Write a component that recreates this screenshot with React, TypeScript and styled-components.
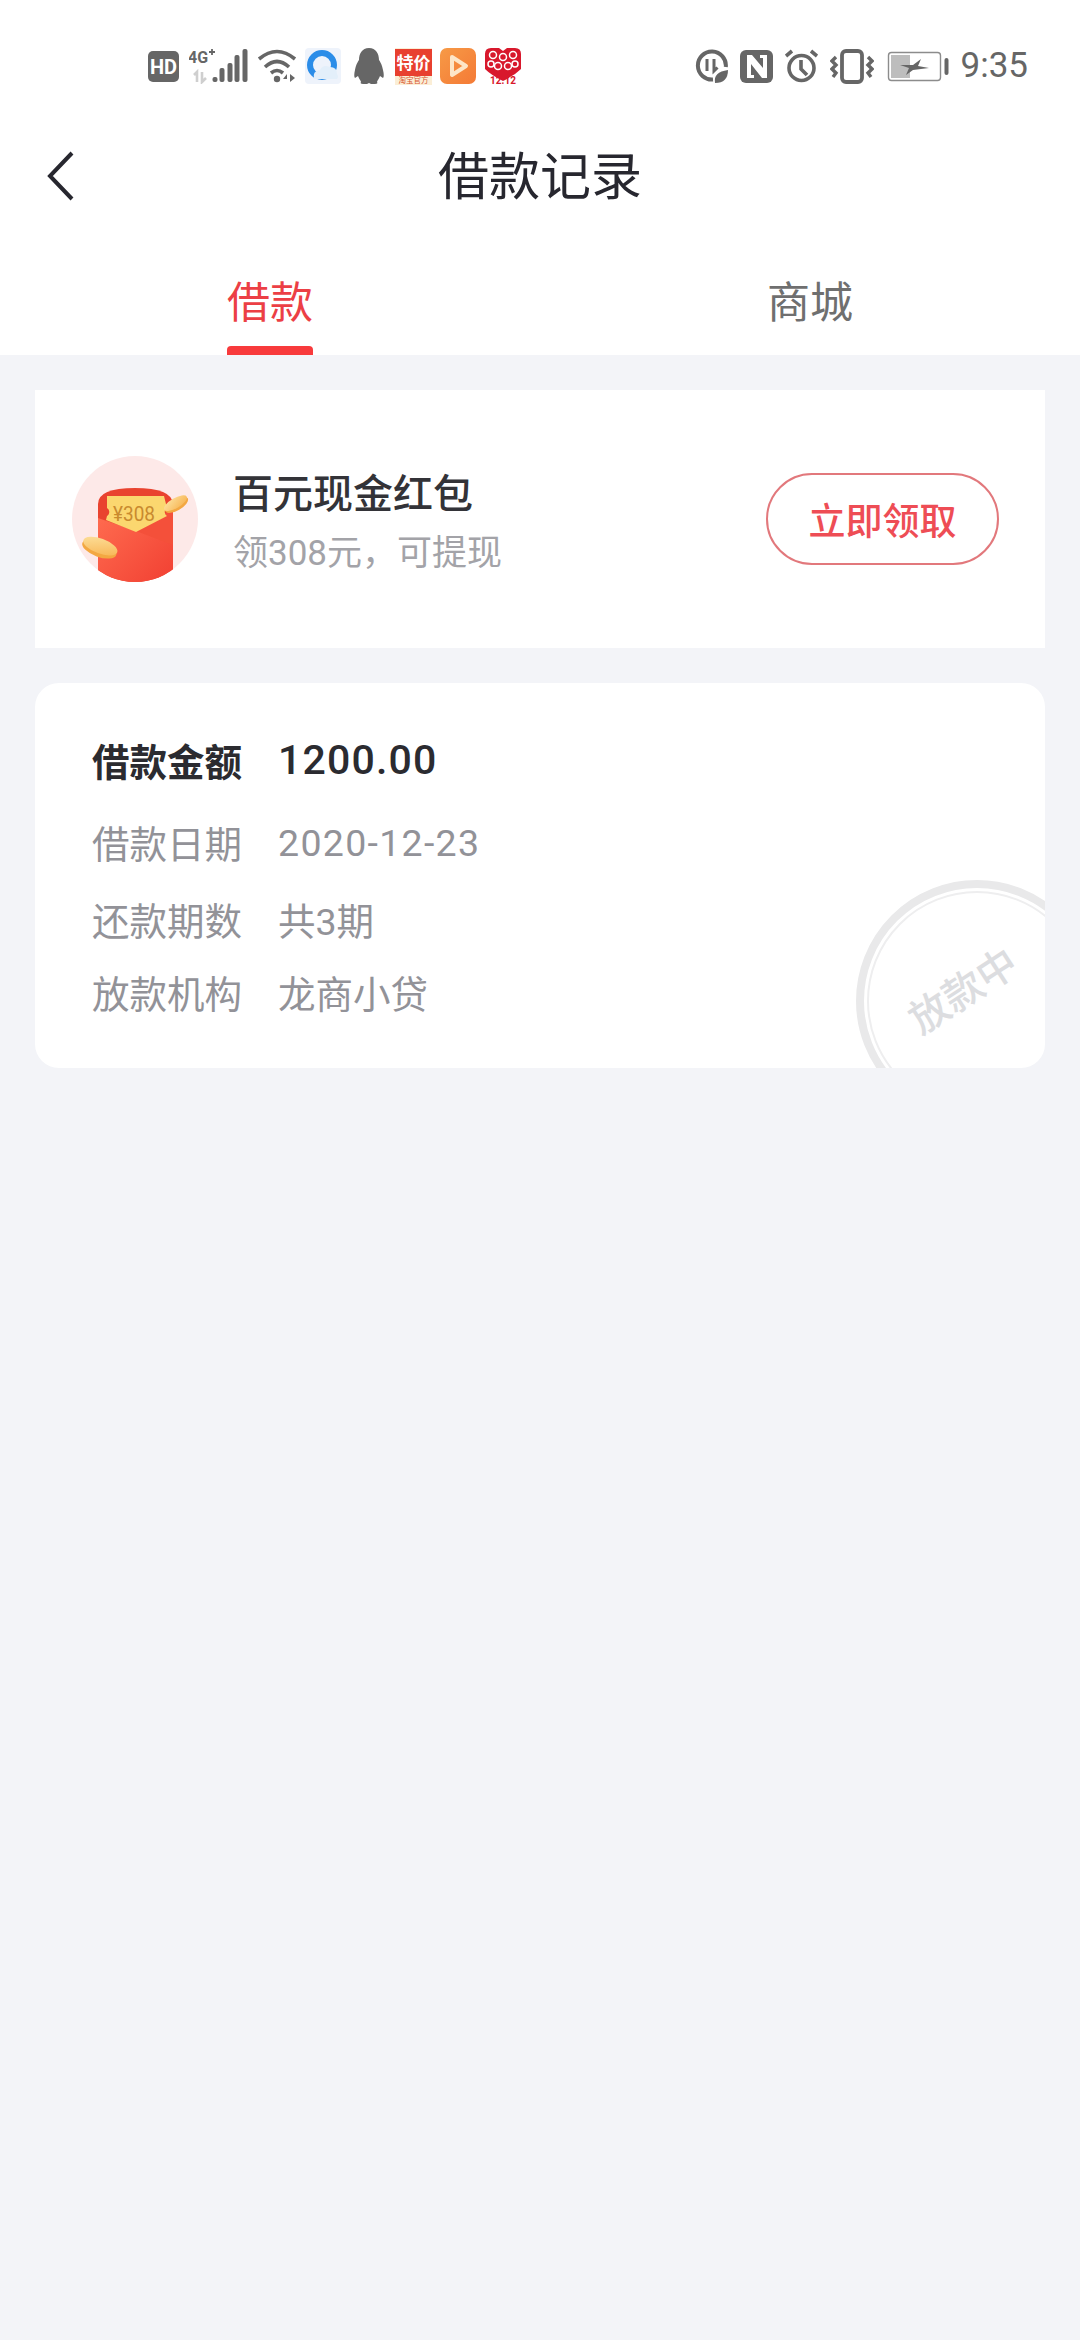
import React from "react";
import styled, {createGlobalStyle} from "styled-components";

const GlobalStyle = createGlobalStyle`
  html, body {
    margin: 0;
    padding: 0;
    background: #f3f4f8;
    font-family: Roboto, "Noto Sans CJK SC", sans-serif;
  }
`

const Page = styled.div`
  width: 1080px;
  min-height: 2340px;
  background: #f3f4f8;
`

const Header = styled.header`
  background: #fff;
`

const StatusBar = styled.div`
  height: 132px;
  display: flex;
  align-items: center;
  justify-content: space-between;
  padding: 0 52px 0 148px;
  color: #666;
`

const IconGroup = styled.div<{ $gap: number }>`
  display: flex;
  align-items: center;
  gap: ${p => p.$gap}px;
`

const Glyph = styled.svg`
  display: block;
  flex: none;
`

const Time = styled.span`
  font-family: Roboto, sans-serif;
  font-size: 35px;
  line-height: 40px;
  color: #666;
`

const NavBar = styled.nav`
  height: 88px;
  display: grid;
  grid-template-columns: 1fr auto 1fr;
  align-items: center;
  padding: 0 46px;
`

const Title = styled.h1`
  margin: 0 0 6px;
  font-family: "Noto Sans CJK SC", sans-serif;
  font-size: 51px;
  line-height: 60px;
  font-weight: 400;
  color: #27272f;
`

const Tabs = styled.div`
  display: grid;
  grid-template-columns: 1fr 1fr;
  height: 135px;
`

const TabItem = styled.div`
  display: flex;
  justify-content: center;
`

const TabInner = styled.div`
  padding-top: 49px;
`

const TabLabel = styled.div<{ $active?: boolean }>`
  font-family: "Noto Sans CJK SC", sans-serif;
  font-size: 43px;
  line-height: 60px;
  color: ${p => (p.$active ? "#ec3f45" : "#6f6f6f")};
`

const TabBar = styled.div<{ $active?: boolean }>`
  height: 9px;
  margin-top: 17px;
  border-radius: 4px 4px 0 0;
  background: ${p => (p.$active ? "#f83a3c" : "transparent")};
`

const Content = styled.main`
  display: flex;
  flex-direction: column;
  gap: 35px;
  padding: 35px;
`

const PromoCard = styled.section`
  height: 258px;
  box-sizing: border-box;
  background: #fff;
  display: flex;
  align-items: center;
  padding: 0 46px 0 37px;
`

const PromoText = styled.div`
  flex: 1;
  margin: 8px 0 0 35px;
  font-family: Roboto, "Noto Sans CJK SC", sans-serif;
`

const PromoTitle = styled.div`
  font-size: 40px;
  line-height: 50px;
  font-weight: 500;
  color: #333338;
`

const PromoSub = styled.div`
  margin-top: 11px;
  font-size: 35px;
  line-height: 46px;
  color: #a3a3a8;
`

const ClaimButton = styled.button`
  width: 233px;
  height: 92px;
  box-sizing: border-box;
  border: 2px solid #e2787c;
  border-radius: 46px;
  background: #fff;
  padding: 0;
  font-family: "Noto Sans CJK SC", sans-serif;
  font-size: 37px;
  font-weight: 500;
  color: #ee4d55;
`

const LoanCard = styled.section`
  position: relative;
  height: 385px;
  box-sizing: border-box;
  overflow: hidden;
  background: #fff;
  border-radius: 24px;
  padding: 51px 0 0 57px;
  font-family: Roboto, "Noto Sans CJK SC", sans-serif;
`

const Row = styled.div<{ $top?: number }>`
  display: flex;
  align-items: center;
  height: 50px;
  margin-top: ${p => p.$top ?? 0}px;
  font-size: 37.5px;
  color: #929298;
`

const RowLabel = styled.span<{ $strong?: boolean }>`
  width: 186px;
  flex: none;
  font-weight: ${p => (p.$strong ? 700 : 400)};
  color: ${p => (p.$strong ? "#2b2b30" : "#929298")};
`

const Amount = styled.span`
  padding-top: 2px;
  font-size: 41px;
  font-weight: 500;
  letter-spacing: 1.2px;
  color: #2b2b30;
`

const DateValue = styled.span`
  padding-top: 3px;
  letter-spacing: 1.3px;
`

const Stamp = styled.div`
  position: absolute;
  left: 821px;
  top: 197px;
  width: 242px;
  height: 242px;
  box-sizing: border-box;
  border: 8px solid #e9e9ea;
  border-radius: 50%;
  padding: 3px;
`

const StampInner = styled.div`
  width: 100%;
  height: 100%;
  box-sizing: border-box;
  border: 2px solid #eeeeef;
  border-radius: 50%;
  display: flex;
  align-items: center;
  justify-content: center;
`

const StampText = styled.span`
  font-size: 40px;
  line-height: 48px;
  font-weight: 500;
  color: #dcdde0;
  transform: translate(-13px, -9px) rotate(-33deg);
`

const HdIcon = () => (
  <Glyph width={33} height={36} viewBox="0 0 33 36">
    <rect x="0" y="3" width="31" height="31" rx="5" fill="#666"/>
    <text x="15.5" y="25.5" textAnchor="middle" fontFamily="Roboto, sans-serif" fontWeight="700" fontSize="20" fill="#fff">HD</text>
  </Glyph>
)

const SignalIcon = () => (
  <Glyph width={60} height={36} viewBox="0 0 60 36">
    <text x="-1" y="15" fontFamily="Roboto, sans-serif" fontWeight="700" fontSize="16" fill="#666">4G</text>
    <path d="M20 4h6M23 1v6" stroke="#666" strokeWidth="1.8"/>
    <path d="M8 34V24l-3 3M13 24v10l4-4" stroke="#cfcfcf" strokeWidth="2.6" fill="none"/>
    {[[26, 29], [33, 20], [41, 15], [48, 7], [56, 1]].map(([x, top]) => (
      <rect key={x} x={x - 2.5} y={top} width="5" height={34 - top} rx="2" fill="#666"/>
    ))}
  </Glyph>
)

const WifiIcon = () => (
  <Glyph width={40} height={36} viewBox="0 0 40 36">
    <g fill="none" stroke="#666" strokeWidth="3.6">
      <path d="M2 11Q20 -4 38 11"/>
      <path d="M8 19Q20 8 32 19"/>
      <path d="M14 25Q20 20 26 25"/>
    </g>
    <circle cx="20" cy="31" r="3.2" fill="#666"/>
    <path d="M30 34V26l-4 5h4zM33 26v8l5-4z" fill="#666"/>
  </Glyph>
)

const BrowserIcon = () => (
  <Glyph width={36} height={36} viewBox="0 0 36 36">
    <rect width="36" height="36" rx="4" fill="#eef3fb"/>
    <circle cx="17" cy="17" r="12" fill="none" stroke="#2b8de8" strokeWidth="6"/>
    <path d="M9 31q-2-8 6-9 3-6 10-3 7 0 7 7 2 3 0 5z" fill="#e3effa"/>
  </Glyph>
)

const PenguinIcon = () => (
  <Glyph width={35} height={36} viewBox="0 0 35 36">
    <path d="M20 0c7 0 10 6 10 12 2 3 3 5 4 10 1 4 1 7 0 8l-3-2c-1 3-3 5-3 6 1 1 0 2-2 2h-4l-2-1-2 1h-4c-2 0-3-1-2-2 0-1-2-3-3-6l-3 2c-1-1-1-4 0-8 1-5 2-7 4-10 0-6 3-12 10-12z" fill="#666"/>
  </Glyph>
)

const TagIcon = () => (
  <Glyph width={40} height={37} viewBox="0 0 40 37">
    <rect x="3" y="0" width="37" height="37" fill="#fbeed6"/>
    <rect x="3" y="1" width="37" height="27" fill="#e8402f"/>
    <text x="21.5" y="21" textAnchor="middle" fontFamily="'Noto Sans CJK SC', sans-serif" fontWeight="700" fontSize="17" fill="#fff">特价</text>
    <text x="21.5" y="34.5" textAnchor="middle" fontFamily="'Noto Sans CJK SC', sans-serif" fontSize="7.5" fill="#d8552f">淘宝官方</text>
  </Glyph>
)

const VideoIcon = () => (
  <Glyph width={36} height={36} viewBox="0 0 36 36">
    <defs>
      <linearGradient id="videoFill" x1="0" y1="0" x2="1" y2="1">
        <stop offset="0" stopColor="#f79a46"/>
        <stop offset="1" stopColor="#f47a36"/>
      </linearGradient>
    </defs>
    <rect width="36" height="36" rx="7" fill="url(#videoFill)"/>
    <path d="M12 9l14 9-14 9z" fill="none" stroke="#fde6c8" strokeWidth="4" strokeLinejoin="round"/>
  </Glyph>
)

const HeartIcon = () => (
  <Glyph width={38} height={42} viewBox="0 -2 38 42">
    <path d="M1 7q0-6 6-6h8l4 3 4-3h8q6 0 6 6v15q-6 6-18 12Q7 28 1 22z" fill="#d8182c"/>
    <g fill="none" stroke="#fff" strokeWidth="1.5">
      <circle cx="9" cy="8" r="3.5"/>
      <circle cx="19" cy="10" r="3.5"/>
      <circle cx="29" cy="8" r="3.5"/>
      <circle cx="7" cy="17" r="3"/>
      <circle cx="31" cy="17" r="3"/>
      <circle cx="14" cy="19" r="3.5"/>
      <circle cx="24" cy="19" r="3.5"/>
    </g>
    <text x="19" y="36.5" textAnchor="middle" fontFamily="Roboto, sans-serif" fontWeight="700" fontSize="10" fill="#d8182c">12.12</text>
  </Glyph>
)

const LeafDataIcon = () => (
  <Glyph width={33} height={36} viewBox="0 0 33 36">
    <path d="M18 31.5A14 14 0 1 1 30.8 19" fill="none" stroke="#666" strokeWidth="4"/>
    <path d="M12 11v12M19 11v12l3.5-3.5" fill="none" stroke="#666" strokeWidth="3"/>
    <path d="M20 35q-2-11 13-13 0 13-13 13z" fill="#666"/>
  </Glyph>
)

const NfcIcon = () => (
  <Glyph width={33} height={36} viewBox="0 0 33 36">
    <rect x="0" y="2" width="33" height="33" rx="6" fill="#666"/>
    <path d="M7 7h5l11 13V10h-3V7h7v23h-5L11 16v11h3v3H7z" fill="#fff"/>
  </Glyph>
)

const AlarmIcon = () => (
  <Glyph width={33} height={36} viewBox="0 0 33 36">
    <g fill="none" stroke="#666" strokeWidth="3.6">
      <circle cx="16.5" cy="20" r="12.5"/>
      <path d="M16 12v9l6 6M1 8l6-5M32 8l-6-5"/>
    </g>
  </Glyph>
)

const VibrateIcon = () => (
  <Glyph width={44} height={36} viewBox="0 0 44 36">
    <rect x="12" y="3" width="20" height="31" rx="4" fill="none" stroke="#666" strokeWidth="3.8"/>
    <path d="M6 9L2 13l4 4-4 4 4 4-3 4M38 9l4 4-4 4 4 4-4 4 3 4" fill="none" stroke="#666" strokeWidth="3.4"/>
  </Glyph>
)

const BatteryIcon = () => (
  <Glyph width={63} height={36} viewBox="0 0 63 36">
    <rect x="2.5" y="4.5" width="52" height="28" rx="3" fill="none" stroke="#8c8c8c" strokeWidth="1.4"/>
    <rect x="5" y="7" width="19" height="23" fill="#bdbdbd"/>
    <path d="M14 17h13l8-6-3 7 11 2-16 2-7 5 3-7z" fill="#666"/>
    <rect x="58.5" y="10" width="4" height="17" rx="2" fill="#666"/>
  </Glyph>
)

const RedPacket = () => (
  <svg width="126" height="126" viewBox="0 0 126 126" style={{flex: "none"}}>
    <defs>
      <clipPath id="avatarClip"><circle cx="63" cy="63" r="63"/></clipPath>
      <linearGradient id="packetBody" x1="0" y1="0" x2="1" y2="1">
        <stop offset="0" stopColor="#ff6d50"/>
        <stop offset="1" stopColor="#f13f32"/>
      </linearGradient>
      <linearGradient id="coinFill" x1="0" y1="0" x2="1" y2="1">
        <stop offset="0" stopColor="#fde3a0"/>
        <stop offset="1" stopColor="#f7b24f"/>
      </linearGradient>
    </defs>
    <circle cx="63" cy="63" r="63" fill="#fde9e8"/>
    <g clipPath="url(#avatarClip)">
      <path d="M26 48Q26 32 63 32T101 48V130H26z" fill="#e9432f"/>
      <path d="M26 62l38 13 37-22v77H26z" fill="url(#packetBody)"/>
      <path d="M64 75l37-22v36z" fill="#f4503a"/>
      <path d="M35 40h57l3 12c-3 1-3 6 0 8L64 76 34 64l1-4c3-2 3-6 0-8z" fill="#fbd76f"/>
    </g>
    <text x="62" y="65" textAnchor="middle" fontFamily="Roboto, sans-serif" fontSize="20" textLength="42" lengthAdjust="spacingAndGlyphs" fill="#c98a2e">¥308</text>
    <g transform="rotate(-30 104 48)">
      <ellipse cx="104" cy="49" rx="13" ry="5.5" fill="#f3a842"/>
      <ellipse cx="104" cy="47" rx="13" ry="5" fill="url(#coinFill)"/>
    </g>
    <g transform="rotate(20 28 91)">
      <ellipse cx="28" cy="93" rx="18" ry="8" fill="#f3a842"/>
      <ellipse cx="28" cy="90" rx="18" ry="7.5" fill="url(#coinFill)"/>
    </g>
  </svg>
)

const BackIcon = () => (
  <Glyph width={30} height={50} viewBox="0 0 30 50">
    <path d="M26 2L4 25l22 23" fill="none" stroke="#27272f" strokeWidth="4"/>
  </Glyph>
)

const App = () => {
  return (
    <Page>
      <GlobalStyle/>
      <Header>
        <StatusBar>
          <IconGroup $gap={8}>
            <HdIcon/>
            <SignalIcon/>
            <WifiIcon/>
            <BrowserIcon/>
            <PenguinIcon/>
            <TagIcon/>
            <VideoIcon/>
            <HeartIcon/>
          </IconGroup>
          <IconGroup $gap={12}>
            <LeafDataIcon/>
            <NfcIcon/>
            <AlarmIcon/>
            <VibrateIcon/>
            <BatteryIcon/>
            <Time>9:35</Time>
          </IconGroup>
        </StatusBar>
        <NavBar>
          <BackIcon/>
          <Title>借款记录</Title>
        </NavBar>
        <Tabs>
          <TabItem>
            <TabInner>
              <TabLabel $active>借款</TabLabel>
              <TabBar $active/>
            </TabInner>
          </TabItem>
          <TabItem>
            <TabInner>
              <TabLabel>商城</TabLabel>
              <TabBar/>
            </TabInner>
          </TabItem>
        </Tabs>
      </Header>
      <Content>
        <PromoCard>
          <RedPacket/>
          <PromoText>
            <PromoTitle>百元现金红包</PromoTitle>
            <PromoSub>领308元，可提现</PromoSub>
          </PromoText>
          <ClaimButton>立即领取</ClaimButton>
        </PromoCard>
        <LoanCard>
          <Row>
            <RowLabel $strong>借款金额</RowLabel>
            <Amount>1200.00</Amount>
          </Row>
          <Row $top={32}>
            <RowLabel>借款日期</RowLabel>
            <DateValue>2020-12-23</DateValue>
          </Row>
          <Row $top={27}>
            <RowLabel>还款期数</RowLabel>
            <span>共3期</span>
          </Row>
          <Row $top={23}>
            <RowLabel>放款机构</RowLabel>
            <span>龙商小贷</span>
          </Row>
          <Stamp>
            <StampInner>
              <StampText>放款中</StampText>
            </StampInner>
          </Stamp>
        </LoanCard>
      </Content>
    </Page>
  );
}

export default App;
